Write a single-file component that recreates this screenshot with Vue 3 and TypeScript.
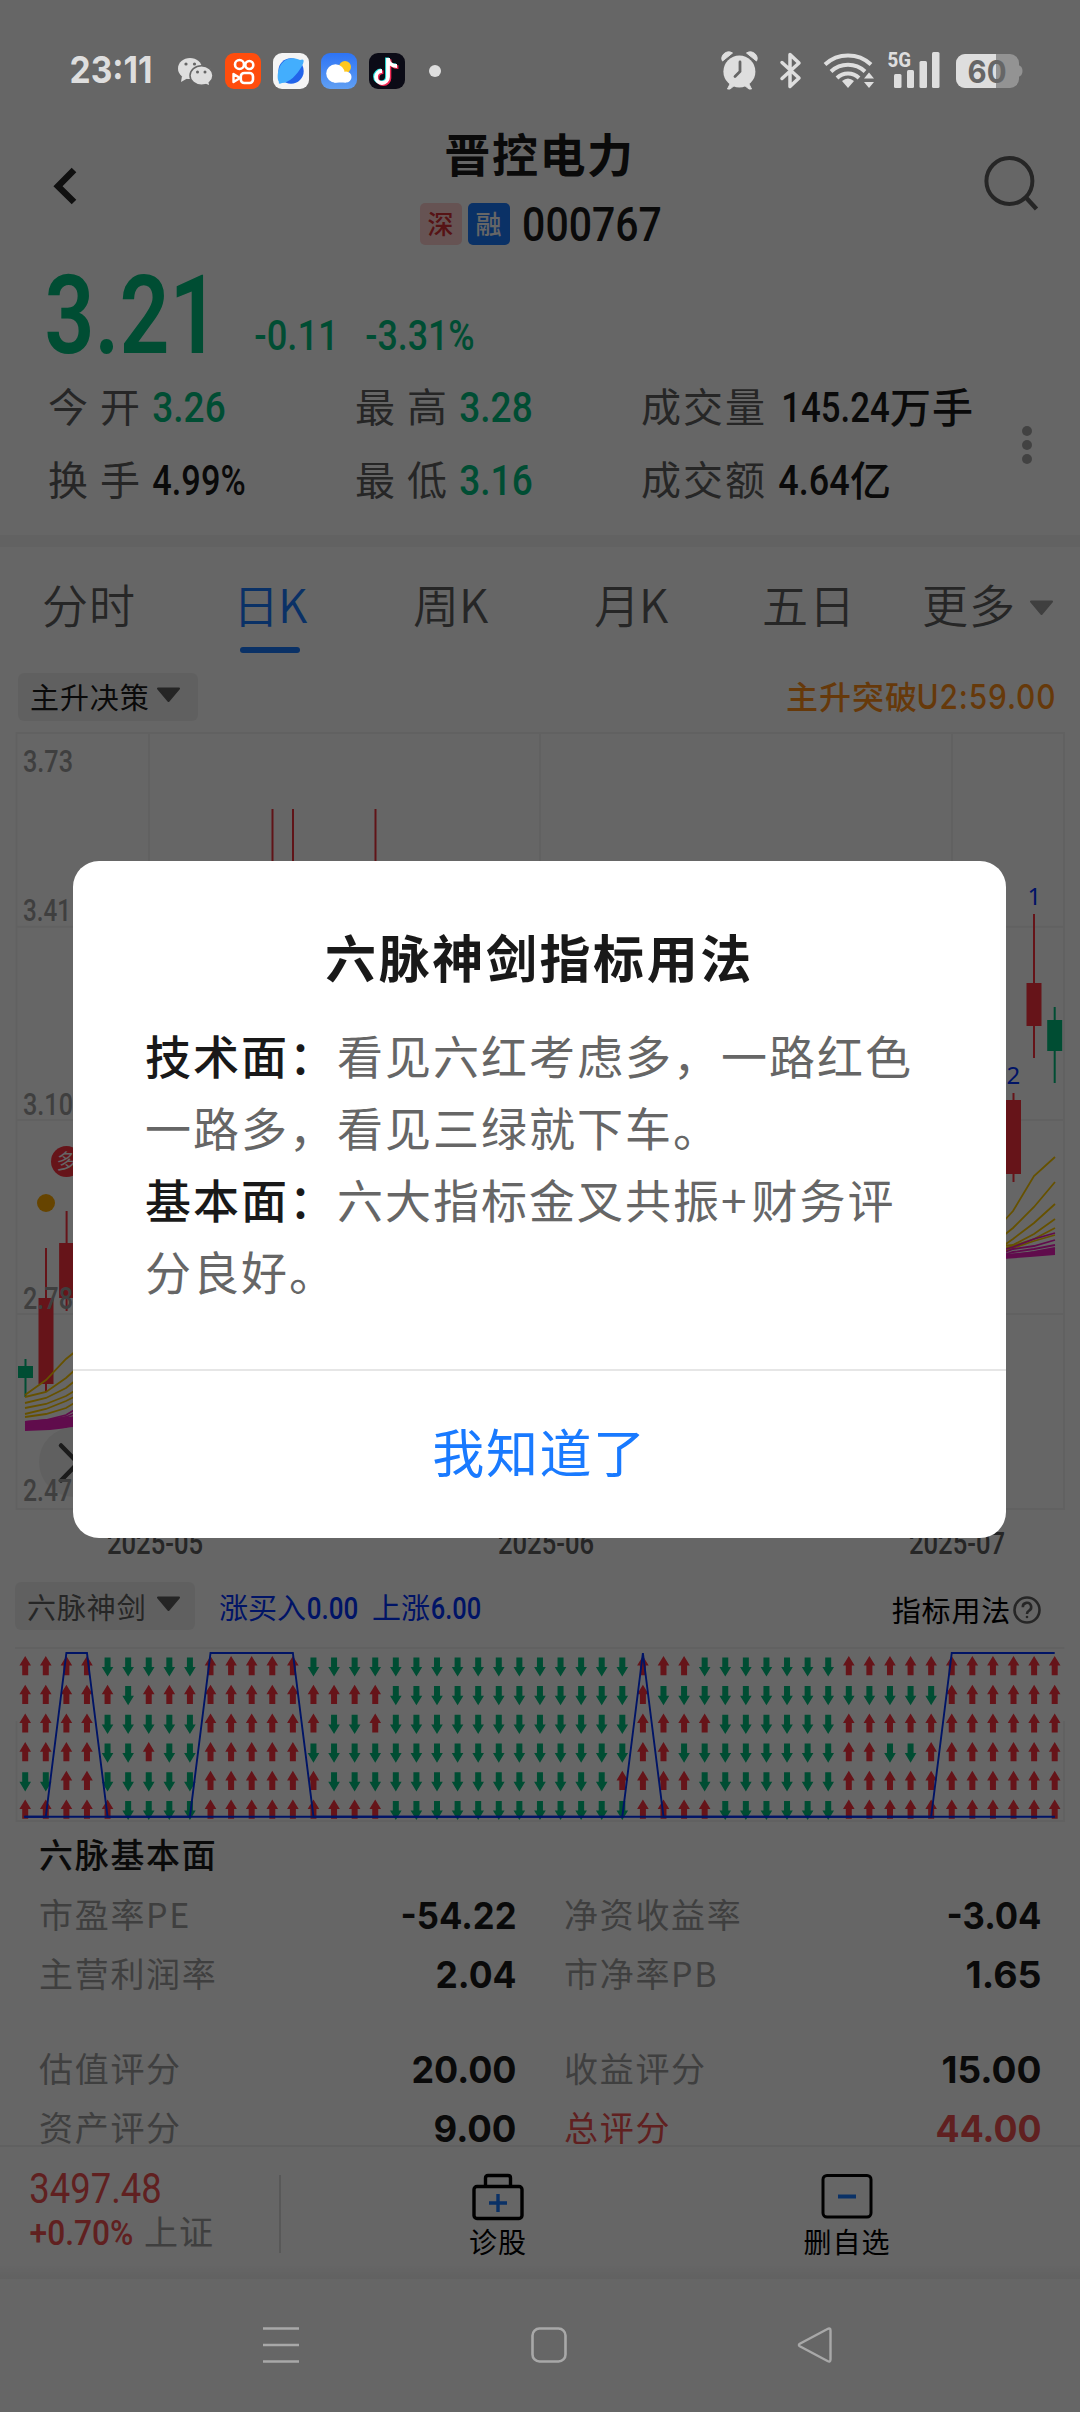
<script setup lang="ts">
import { h } from 'vue'

interface FitProps { t: string; w: number; h: number; weight?: number; font?: string }

// Figures set to an exact width; the box is as tall as the digits themselves.
const Fit = (p: FitProps) => {
  const size = p.h / (p.font === 'Inter' ? 0.727 : 0.711)
  const pad = size * 0.04
  return h('svg', { width: p.w, height: p.h, style: 'overflow:visible;flex:none;display:block' }, [
    h('text', {
      x: -pad, y: p.h, fill: 'currentColor', 'font-size': size, 'font-weight': p.weight ?? 500,
      'font-family': `${p.font ?? 'Roboto'}, "Noto Sans CJK SC", sans-serif`,
      textLength: p.w + pad * 2, lengthAdjust: 'spacingAndGlyphs',
    }, p.t),
  ])
}

const prices = [
  { t: '3.73', y: 750, w: 48 }, { t: '3.41', y: 899, w: 46 }, { t: '3.10', y: 1093, w: 48 },
  { t: '2.78', y: 1287, w: 48 }, { t: '2.47', y: 1479, w: 47 },
]
const dates = [{ t: '2025-05', x: 108 }, { t: '2025-06', x: 499 }, { t: '2025-07', x: 910 }]

const candles = [
  { x: 25.5, top: 1359, open: 1366, close: 1378, low: 1397, up: false },
  { x: 46, top: 1248, open: 1298, close: 1384, low: 1391, up: true },
  { x: 66.6, top: 1211, open: 1243, close: 1298, low: 1311, up: true },
  { x: 1013.5, top: 1093, open: 1100, close: 1174, low: 1182, up: true },
  { x: 1034, top: 914, open: 983, close: 1026, low: 1058, up: true },
  { x: 1054.7, top: 1007, open: 1020, close: 1051, low: 1083, up: false },
]
const xsLeft = [25, 46, 66, 76]
const xsRight = [1003, 1013, 1034, 1055]
const line = (xs: number[], ys: number[]) => xs.map((x, i) => `${x},${ys[i]}`).join(' ')
const yellow = [
  ...[[1395, 1380, 1359, 1351], [1397, 1392, 1378, 1369], [1403, 1398, 1388, 1380], [1408, 1404, 1396, 1390], [1414, 1409, 1401, 1396], [1417, 1414, 1408, 1402]].map(v => line(xsLeft, v)),
  ...[[1222, 1211, 1176, 1157], [1236, 1228, 1207, 1182], [1246, 1239, 1223, 1204], [1246, 1245, 1234, 1219], [1249, 1246, 1239, 1228], [1252, 1248, 1241, 1235]].map(v => line(xsRight, v)),
]
const magenta = [
  ...[[1422, 1420, 1415, 1409], [1423, 1421, 1417, 1413], [1425, 1423, 1420, 1417], [1427, 1426, 1424, 1421], [1429, 1428, 1426, 1425]].map(v => line(xsLeft, v)),
  ...[[1250, 1247, 1239, 1233], [1253, 1249, 1246, 1240], [1255, 1252, 1249, 1245], [1256, 1255, 1252, 1248]].map(v => line(xsRight, v)),
]

// Run lengths per row, alternating up / down and starting with up.
const runs = [
  [4, 5, 5, 16, 3, 7, 11],
  [5, 1, 12, 12, 1, 14, 6],
  [4, 5, 6, 2, 1, 12, 4, 6, 11],
  [4, 2, 1, 2, 5, 16, 2, 8, 2, 2, 7],
  [0, 2, 2, 5, 6, 14, 4, 7, 11],
  [5, 4, 9, 12, 4, 6, 11],
]
const STEP = 20.59
const arrows = runs.flatMap((row, r) => {
  let col = 0
  return row.flatMap((n, k) => Array.from({ length: n }, () => ({
    up: k % 2 === 0, x: 25.2 + STEP * col++, y: 11 + r * 28.7,
  })))
})
const arrowPath = (a: { up: boolean; x: number; y: number }) => a.up
  ? `M${a.x} ${a.y}l5.8 9.6h-2.8v9.6h-6v-9.6h-2.8z`
  : `M${a.x} ${a.y + 20.6}l5.8 -9.6h-2.8v-9.6h-6v9.6h-2.8z`
const highs = new Set([2, 3, 9, 10, 11, 12, 13, 30, 45, 46, 47, 48, 49, 50])
const signal = Array.from({ length: 51 }, (_, i) => `${25.2 + STEP * i},${highs.has(i) ? 8 : 171.7}`).join(' ')

const facts = [
  [{ k: '市盈率PE', v: '-54.22', w: 113 }, { k: '净资收益率', v: '-3.04', w: 92 }],
  [{ k: '主营利润率', v: '2.04', w: 78 }, { k: '市净率PB', v: '1.65', w: 73 }],
  [{ k: '估值评分', v: '20.00', w: 102 }, { k: '收益评分', v: '15.00', w: 97 }],
  [{ k: '资产评分', v: '9.00', w: 80 }, { k: '总评分', v: '44.00', w: 103, hot: true }],
]
</script>

<template>
  <div class="screen">
    <div class="status">
      <Fit class="clock" t="23:11" :w="80" :h="27" :weight="650" font="Inter" />
      <svg class="apps" width="280" height="40" viewBox="174 51 280 40">
        <g fill="#dedede">
          <ellipse cx="190" cy="68.500" rx="12" ry="10.500" /><path d="M182 76l-1 6 7-4z" />
          <ellipse cx="201.500" cy="75.500" rx="11.500" ry="9.800" stroke="#666" stroke-width="1.500" /><path d="M204 83l5 2-1-5z" />
        </g>
        <g fill="#666"><circle cx="186" cy="64" r="1.600" /><circle cx="194.500" cy="64" r="1.600" /><circle cx="197.500" cy="72" r="1.500" /><circle cx="205" cy="72" r="1.500" /></g>
        <rect x="225" y="53" width="36" height="36" rx="9" fill="#ff4d0d" />
        <g fill="none" stroke="#fff" stroke-width="2.600">
          <circle cx="239.500" cy="64.500" r="4.500" /><circle cx="249.300" cy="65" r="4" />
          <rect x="240.800" y="73" width="12.200" height="10" rx="3.500" /><path d="M240 78l-6.500-4v8z" stroke-linejoin="round" stroke-width="2.400" />
        </g>
        <rect x="273" y="53" width="36" height="36" rx="9" fill="#f4f4f4" />
        <circle cx="291" cy="71" r="12.700" fill="#2264ea" />
        <path d="M279 82c-3-4-1-20 9-23 6-2 10 0 12 1 5-2 4 2 2 6-5 9-13 17-20 17-2 1-4 1-3-1z" fill="#43aefd" />
        <rect x="321" y="53" width="36" height="36" rx="9" fill="url(#sky)" />
        <circle cx="345" cy="67" r="6" fill="#ffc820" />
        <g fill="#fff"><circle cx="335.500" cy="73.500" r="9.300" /><circle cx="346" cy="77" r="5.500" /><rect x="334" y="74" width="12" height="8.500" /></g>
        <rect x="369" y="53" width="36" height="36" rx="9" fill="#0b0b16" />
        <g fill="none" stroke-width="3.800">
          <path d="M388 58v19a6 6 0 1 1-6-6M388 58c0 5 4 8 9 8" stroke="#25e5e0" transform="translate(-1 -.5)" />
          <path d="M388 58v19a6 6 0 1 1-6-6M388 58c0 5 4 8 9 8" stroke="#f42a55" transform="translate(1.400 1.200)" />
          <path d="M388 58v19a6 6 0 1 1-6-6M388 58c0 5 4 8 9 8" stroke="#fff" />
        </g>
        <circle cx="435" cy="71" r="6" fill="#dedede" />
        <defs><linearGradient id="sky" x2="0" y2="1"><stop stop-color="#2e74f5" /><stop offset="1" stop-color="#609ff3" /></linearGradient></defs>
      </svg>
      <svg class="signals" width="310" height="40" viewBox="718 51 310 40" fill="#dedede">
        <circle cx="739.400" cy="71.500" r="16" />
        <path d="M722.500 61c-3-5 4-12 10-8zM756.500 61c3-5-4-12-10-8zM731 82l-3.500 7h2.500l5-4zM748 82l3.500 7h-2.500l-5-4z" stroke="#dedede" stroke-width="1" />
        <path d="M740 62v9.500l-5 5" fill="none" stroke="#666" stroke-width="2.800" stroke-linecap="round" />
        <path d="M782 62.500l17 15.500-9 8.500v-32l9 8.500-17 15.500" fill="none" stroke="#dedede" stroke-width="3.500" stroke-linecap="round" stroke-linejoin="round" />
        <g fill="none" stroke="#dedede" stroke-width="4"><path d="M825 64.500a34 34 0 0 1 46 0" /><path d="M831 71.500a25 25 0 0 1 34 0" /><path d="M837 78a16 16 0 0 1 22 0" /></g>
        <path d="M842 81q6-5 12 0l-6 7zM864 78.500h10l-5-6zM864 82h10l-5 6z" />
        <rect x="894" y="74" width="7.500" height="14" rx="1.500" /><rect x="907" y="70" width="7" height="18" rx="1.500" /><rect x="919.500" y="61" width="7.500" height="27" rx="1.500" /><rect x="932" y="52" width="7.500" height="36" rx="1.500" />
        <text x="887.500" y="66.500" font-family="Roboto" font-size="21" font-weight="800" textLength="23.500" lengthAdjust="spacingAndGlyphs">5G</text>
        <rect x="956" y="54" width="63" height="34" rx="9" fill="#939393" /><path d="M1018 65q4.500 1 4.500 6t-4.500 6z" fill="#939393" />
        <path d="M965 54h31v34h-31a9 9 0 0 1-9-9v-16a9 9 0 0 1 9-9z" />
        <text x="967.500" y="82.500" font-family="Inter" font-size="31" font-weight="700" fill="#666" textLength="39" lengthAdjust="spacingAndGlyphs">60</text>
      </svg>
    </div>

    <header class="header">
      <svg class="back" width="26" height="42" viewBox="52 165 26 42"><path d="M74 170L58 186.200L74 202" fill="none" stroke="#282828" stroke-width="6.500" /></svg>
      <div class="stock">
        <div class="name">晋控电力</div>
        <div class="code"><span class="badge sz">深</span><span class="badge rong">融</span><Fit class="num" t="000767" :w="136" :h="34" /></div>
      </div>
      <svg class="search" width="56" height="58" viewBox="983 154 56 58" fill="none" stroke="#606060" stroke-width="4"><circle cx="1009.400" cy="181" r="23" /><path d="M1025.500 197l11 12" stroke-width="4.500" /></svg>
    </header>

    <section class="quote">
      <div class="last green"><Fit t="3.21" :w="166" :h="78" :weight="600" /><Fit class="chg" t="-0.11" :w="81" :h="30" /><Fit class="pct" t="-3.31%" :w="106" :h="30" /></div>
      <div class="stats">
        <div class="cell"><span class="lab wide">今开</span><Fit class="green" t="3.26" :w="70" :h="30" /></div>
        <div class="cell"><span class="lab wide">最高</span><Fit class="green" t="3.28" :w="70" :h="30" /></div>
        <div class="cell"><span class="lab tri">成交量</span><Fit class="first" t="145.24" :w="105" :h="30" /><span class="unit">万手</span></div>
        <div class="cell"><span class="lab wide">换手</span><Fit t="4.99%" :w="90" :h="30" /></div>
        <div class="cell"><span class="lab wide">最低</span><Fit class="green" t="3.16" :w="70" :h="30" /></div>
        <div class="cell"><span class="lab tri">成交额</span><Fit t="4.64" :w="68" :h="30" /><span class="unit">亿</span></div>
      </div>
      <div class="more"><i></i><i></i><i></i></div>
    </section>
    <div class="band"></div>

    <nav class="tabs">
      <span>分时</span><span class="on">日K</span><span>周K</span><span>月K</span><span>五日</span><span>更多</span>
      <svg width="25" height="16" viewBox="0 0 25 16"><path d="M2 1.500h21l-10.500 12.500z" fill="#9d9d9d" stroke="#9d9d9d" stroke-width="2" stroke-linejoin="round" /></svg>
    </nav>

    <div class="pick">
      <div class="chip"><span>主升决策</span><svg width="25" height="16" viewBox="0 0 25 16"><path d="M2 1.500h21l-10.500 12.500z" fill="#5c5c5c" stroke="#5c5c5c" stroke-width="2" stroke-linejoin="round" /></svg></div>
      <div class="hint"><span>主升突破</span><Fit t="U2:59.00" :w="137" :h="25" font="Inter" :weight="550" /></div>
    </div>

    <svg class="chart" width="1080" height="833" viewBox="0 732 1080 833">
      <g fill="none" stroke="#f3f3f3" stroke-width="2">
        <path d="M16.500 733H1064V1509H16.500zM149 733V1509M540 733V1509M952 733V1509M17 926.700H1064M17 1120H1064M17 1314H1064" />
      </g>
      <path d="M272.500 809V900M293 809V900M375.500 809V900" stroke="#f0323c" stroke-width="2" />
      <g v-for="(c, i) in candles" :key="i" :fill="c.up ? '#ff323f' : '#00c07f'">
        <rect :x="c.x - 1" :y="c.top" width="2" :height="c.low - c.top" />
        <rect :x="c.x - 7.5" :y="c.open" width="15" :height="c.close - c.open" />
      </g>
      <polygon points="25,1421 50,1419 76,1416 76,1427 50,1430 25,1431" fill="#f01fbe" />
      <polygon points="1003,1254 1030,1252 1055,1248 1055,1255 1030,1257 1003,1259" fill="#f01fbe" />
      <g fill="none" stroke-width="1.800">
        <polyline v-for="(p, i) in yellow" :key="i" :points="p" stroke="#ffcb00" />
        <polyline v-for="(p, i) in magenta" :key="i" :points="p" stroke="#f01fbe" />
      </g>
      <circle cx="66.500" cy="1161.500" r="15.500" fill="#ff323f" />
      <text x="56.500" y="1169" font-size="20" fill="#fff" font-family="Noto Sans CJK SC">多</text>
      <circle cx="46" cy="1203" r="9" fill="#ffab00" />
      <g fill="#0032ff" font-family="Noto Sans" font-size="24"><text x="1027.500" y="905">1</text><text x="1006.500" y="1084">2</text></g>
      <circle cx="74" cy="1462" r="35" fill="#f0f0f0" />
      <path d="M61 1445.500L78 1463L61 1480.500" fill="none" stroke="#444" stroke-width="4.500" stroke-linecap="round" />
      <g font-family="Roboto" font-size="31" font-weight="500">
        <text v-for="p in prices" :key="p.t" x="23" :y="p.y + 22" :textLength="p.w + 2" lengthAdjust="spacingAndGlyphs" fill="#9d9d9d">{{ p.t }}</text>
        <text v-for="d in dates" :key="d.t" :x="d.x - 1" y="1554" textLength="96" lengthAdjust="spacingAndGlyphs" fill="#606060">{{ d.t }}</text>
      </g>
    </svg>

    <div class="pick second">
      <div class="chip gray"><span>六脉神剑</span><svg width="25" height="16" viewBox="0 0 25 16"><path d="M2 1.500h21l-10.500 12.500z" fill="#5c5c5c" stroke="#5c5c5c" stroke-width="2" stroke-linejoin="round" /></svg></div>
      <div class="legend"><span>涨买入</span><Fit t="0.00" :w="49" :h="22" /><span class="up">上涨</span><Fit t="6.00" :w="48" :h="22" /></div>
      <div class="usage"><span>指标用法</span>
        <svg width="30" height="30" viewBox="0 0 30 30" fill="none" stroke="#606060" stroke-width="2.600"><circle cx="15" cy="15" r="12.500" /><path d="M10.800 12.200a4.200 4.200 0 1 1 6 3.600q-1.800 1-1.800 3.200" /><circle cx="15" cy="22" r="1.300" fill="#606060" stroke="none" /></svg>
      </div>
    </div>

    <svg class="chart" width="1080" height="180" viewBox="0 0 1080 180">
      <path d="M15 3H1064.500M16.500 76V176H1064V76" fill="none" stroke="#f3f3f3" stroke-width="2" />
      <path v-for="(a, i) in arrows" :key="i" :d="arrowPath(a)" :fill="a.up ? '#ff323f' : '#00c07f'" />
      <polyline :points="signal" fill="none" stroke="#0032ff" stroke-width="1.900" />
      <path d="M24 171.700H1055" stroke="#0032ff" stroke-width="2" />
    </svg>

    <section class="facts">
      <h3>六脉基本面</h3>
      <div v-for="(row, i) in facts" :key="i" class="row" :class="{ gap: i === 2 }">
        <div v-for="f in row" :key="f.k" class="fact" :class="{ hot: f.hot }"><span>{{ f.k }}</span><Fit class="val" :t="f.v" :w="f.w" :h="27" :weight="700" font="Inter" /></div>
      </div>
    </section>

    <footer class="bar">
      <div class="index"><Fit t="3497.48" :w="129" :h="30" :weight="450" /><div class="chgline"><Fit t="+0.70%" :w="101" :h="25" /><span>上证</span></div></div>
      <i class="sep"></i>
      <div class="act a1">
        <svg width="56" height="50" viewBox="0 0 56 50" fill="none" stroke="#000" stroke-width="3.400"><rect x="4" y="14.500" width="48" height="32" rx="3" /><path d="M15.500 14V6q0-2.500 2.500-2.500h20q2.500 0 2.500 2.500v8" /><path d="M28 22v18M19 31h18" stroke="#197aff" /></svg>
        <span>诊股</span>
      </div>
      <div class="act a2">
        <svg width="56" height="50" viewBox="0 0 56 50" fill="none" stroke="#000" stroke-width="3"><rect x="4" y="3.500" width="48" height="41.500" rx="4" /><path d="M19 24.500h18" stroke="#197aff" stroke-width="4" /></svg>
        <span>删自选</span>
      </div>
    </footer>
    <div class="shade"></div>

    <div class="sysnav">
      <svg width="36" height="38" viewBox="0 0 36 38" stroke="#a8a8a8" stroke-width="2.600"><path d="M0 2.500h36M0 19h36M0 35.500h36" /></svg>
      <svg width="36" height="38" viewBox="0 0 36 38" fill="none" stroke="#a8a8a8" stroke-width="2.600"><rect x="1.500" y="2.500" width="33" height="33" rx="7" /></svg>
      <svg class="prev" width="36" height="38" viewBox="0 0 36 38" fill="none" stroke="#a8a8a8" stroke-width="2.400"><path d="M33.500 4.500v29q0 3-3 1.500L2.800 20.200q-1.800-1.200 0-2.400L30.500 3q3-1.500 3 1.500z" /></svg>
    </div>

    <div class="scrim">
      <div class="dialog">
        <h2>六脉神剑指标用法</h2>
        <div class="text"><p><b>技术面：</b>看见六红考虑多，一路红色<br>一路多，看见三绿就下车。</p><p><b>基本面：</b>六大指标金叉共振<em>+</em>财务评<br>分良好。</p></div>
        <button>我知道了</button>
      </div>
    </div>
  </div>
</template>

<style>
body { margin: 0; }
</style>

<style scoped>
.screen { position: relative; width: 1080px; height: 2412px; overflow: hidden; background: #fff; color: #191919; font-family: "Noto Sans CJK SC", sans-serif; display: flex; flex-direction: column; box-sizing: border-box; }
.screen > * { flex: none; box-sizing: border-box; }
span { white-space: nowrap; }
svg { display: block; flex: none; }
.status { position: relative; z-index: 3; height: 100px; display: flex; padding-top: 51px; color: #dedede; }
.clock { margin: 5px 23px 0 71px; }
.signals { margin-left: 264px; overflow: visible; }
.header { height: 160px; display: flex; justify-content: space-between; padding: 0 41px 0 52px; }
.back { margin-top: 65px; }
.stock { display: flex; flex-direction: column; align-items: center; margin-left: 18px; }
.name { font-size: 46px; letter-spacing: 1.6px; font-weight: 700; line-height: 60px; margin-top: 22px; }
.code { display: flex; margin-top: 21px; }
.badge { width: 42px; height: 42px; border-radius: 5px; font-size: 26px; line-height: 40px; text-align: center; margin-right: 6px; }
.sz { background: #ffd0d0; color: #d83036; font-weight: 500; }
.rong { background: #197aff; color: #fff; margin-right: 14px; font-weight: 500; }
.code .num { margin-top: 4px; }
.search { margin-top: 54px; }
.green { color: #00c07f; }
.quote { position: relative; height: 275px; padding: 15px 0 0 49px; }
.last { display: flex; height: 79px; }
.chg { margin: 45px 0 0 41px; }
.pct { margin: 45px 0 0 30px; }
.stats { display: grid; grid-template-columns: 307px 286px 400px; grid-template-rows: 73px 73px; margin-top: 15px; }
.cell { display: flex; align-items: center; }
.cell > svg { margin-top: 3px; }
.lab { color: #606060; font-size: 40px; line-height: 50px; margin-top: -2px; margin-left: -1px; font-weight: 400; }
.wide { letter-spacing: 12px; width: 106px; }
.tri { letter-spacing: 2px; width: 139px; }
.cell > .first { margin-left: 3px; }
.unit { font-size: 41px; line-height: 50px; margin: -2px 0 0 2px; font-weight: 500; letter-spacing: 1px; }
.more { position: absolute; left: 1022px; top: 166px; display: flex; flex-direction: column; gap: 4px; }
.more i { width: 10px; height: 10px; border-radius: 50%; background: #a6a6a6; }
.band { height: 12px; background: #f6f6f6; }
.tabs { height: 113px; display: flex; color: #606060; font-size: 46px; line-height: 60px; font-weight: 350; padding: 26px 0 0 42px; letter-spacing: 1px; }
.tabs span { margin-right: 98px; }
.tabs span:nth-child(1) { width: 94px; margin-right: 97px; }
.tabs span:nth-child(2) { width: 76px; margin-right: 104px; letter-spacing: -1px; }
.tabs span:nth-child(3) { width: 79px; margin-right: 102px; letter-spacing: 0; }
.tabs span:nth-child(4) { width: 76px; margin-right: 92px; letter-spacing: -1px; }
.tabs span:nth-child(5) { width: 96px; margin-right: 64px; }
.tabs span:nth-child(6) { width: 94px; margin-right: 13px; }
.tabs .on { color: #197aff; position: relative; }
.tabs .on::after { content: ""; position: absolute; left: 7px; top: 74px; width: 60px; height: 6px; border-radius: 3px; background: #197aff; }
.tabs svg { margin-top: 27px; }
.pick { height: 72px; display: flex; padding: 13px 25px 0 18px; }
.chip { width: 180px; height: 48px; border-radius: 6px; background: #f1f1f1; display: flex; align-items: center; padding-left: 12px; box-sizing: border-box; font-size: 29px; letter-spacing: .9px; color: #191919; }
.chip span { width: 126px; line-height: 40px; margin-top: -3px; }
.chip svg { margin-top: -4px; }
.hint { margin-left: auto; display: flex; color: #ff9019; font-size: 32px; letter-spacing: 1px; font-weight: 500; line-height: 44px; }
.hint svg { margin-top: 11px; }
.second { height: 80px; padding: 17px 38px 0 15px; }
.gray { color: #606060; }
.gray span { width: 129px; margin-top: 0; }
.legend { display: flex; color: #0032ff; font-size: 29px; line-height: 40px; padding: 4px 0 0 24px; }
.legend svg { margin-top: 11px; }
.legend span { margin-right: 2px; }
.legend .up { margin-left: 15px; }
.usage { margin-left: auto; display: flex; color: #000; font-size: 29px; line-height: 40px; letter-spacing: .8px; padding-top: 7px; }
.usage span { margin-right: 1px; }
.usage svg { margin: 6px 0 0 0; }
.facts { height: 320px; padding: 11px 40px 0 39px; overflow: hidden; }
h3 { margin: 0; font-size: 34px; line-height: 36px; height: 49px; font-weight: 500; letter-spacing: 1.700px; }
.row { display: flex; gap: 49px; height: 59px; }
.gap { margin-top: 36px; }
.fact { width: 476px; display: flex; justify-content: space-between; }
.fact span { font-size: 34px; letter-spacing: 1.700px; line-height: 58px; color: #9d9d9d; }
.val { margin-top: 17px; }
.hot, .hot span { color: #f05050; }
.bar { height: 121px; border-top: 2px solid #f0f0f0; display: flex; color: #000; }
.index { width: 250px; padding: 26px 0 0 31px; color: #f05050; box-sizing: border-box; }
.chgline { display: flex; margin-top: 3px; }
.chgline svg { margin-top: 14px; }
.chgline span { color: #9d9d9d; font-size: 34px; line-height: 50px; margin-left: 12px; letter-spacing: 1px; }
.sep { width: 2px; height: 78px; margin: 28px 0 0 29px; background: #dcdcdc; }
.act { display: flex; flex-direction: column; align-items: center; font-size: 28px; line-height: 34px; letter-spacing: 1px; width: 100px; }
.act svg { margin: 25px 0 2px; }
.a1 { margin-left: 167px; }
.a2 { margin-left: 249px; }
.shade { height: 13px; background: linear-gradient(#fdfdfd, #f3f3f3); }
.sysnav { position: relative; z-index: 3; height: 133px; display: flex; padding: 47px 0 0 263px; gap: 232px; }
.sysnav .prev { margin-left: -2px; }
.scrim { position: absolute; inset: 0; background: rgba(0, 0, 0, .6); z-index: 2; display: grid; place-items: center; padding: 0 1px 13px 0; }
.dialog { width: 933px; height: 677px; border-radius: 26px; background: #fff; overflow: hidden; display: flex; flex-direction: column; }
h2 { margin: 59px 0 0; font-size: 51px; line-height: 72px; letter-spacing: 2.600px; text-align: center; font-weight: 700; }
.text { margin: 26px 0 0 72px; font-size: 46px; line-height: 72px; letter-spacing: 2px; color: #666; font-weight: 400; height: 351px; }
.text p { margin: 0; white-space: nowrap; }
.text b { color: #191919; font-weight: 500; }
.text em { font-style: normal; letter-spacing: 5px; }
button { border: 0; border-top: 2px solid #e6e6e6; background: none; width: 100%; height: 169px; padding: 0 0 7px; font: 400 52px/60px "Noto Sans CJK SC", sans-serif; letter-spacing: 1.600px; color: #197aff; }
</style>
